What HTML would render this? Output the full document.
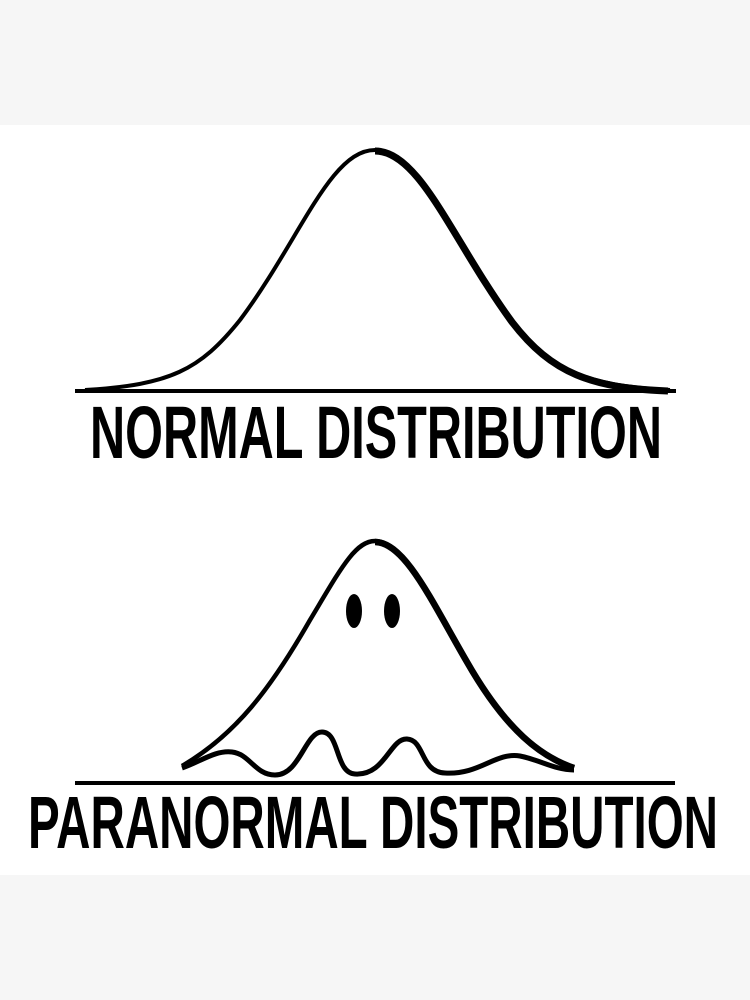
<!DOCTYPE html>
<html><head><style>
html,body{margin:0;padding:0;width:750px;height:1000px;background:#f6f6f6;overflow:hidden}
svg{display:block}
</style></head><body>
<svg width="750" height="1000" viewBox="0 0 750 1000">
<rect x="0" y="0" width="750" height="1000" fill="#f6f6f6"/>
<rect x="0" y="125" width="750" height="750" fill="#fff"/>
<!-- bell curve -->
<path d="M75 391 L676 391" stroke="#000" stroke-width="4" fill="none"/>
<path d="M85 390 C170 385 200 370 240 320 C300 240 330 150 375 150 C420 150 450 240 510 320 C550 372 590 386 670 390" stroke="#000" stroke-width="4" fill="none"/>
<path d="M375 151 C420 151 452 240 512 322 C552 374 592 388 668 391" stroke="#000" stroke-width="7" fill="none"/>
<text x="90" y="458" font-family="Liberation Sans, sans-serif" font-weight="bold" font-size="74" textLength="572" lengthAdjust="spacingAndGlyphs" fill="#000">NORMAL DISTRIBUTION</text>
<!-- ghost -->
<path d="M75 783 L675 783" stroke="#000" stroke-width="4" fill="none"/>
<path d="M182 766 C235 735 270 690 310 620 C340 570 355 541 375 541 C405 541 430 600 465 660 C505 730 540 755 574 768" stroke="#000" stroke-width="4.5" fill="none"/>
<path d="M375 542 C405 542 432 602 467 662 C507 732 542 757 574 768" stroke="#000" stroke-width="6.5" fill="none"/>
<path d="M182 768 C200 762 215 750 232 752 C250 754 255 775 275 775 C300 775 305 732 322 732 C340 732 335 773 355 774 C385 776 390 738 407 739 C425 740 420 772 445 773 C480 775 495 752 520 756 C540 760 555 770 574 770" stroke="#000" stroke-width="5" fill="none" stroke-linejoin="round"/>
<ellipse cx="354" cy="611" rx="8" ry="17" fill="#000"/>
<ellipse cx="392" cy="611" rx="8" ry="17" fill="#000"/>
<text x="28" y="848" font-family="Liberation Sans, sans-serif" font-weight="bold" font-size="74" textLength="690" lengthAdjust="spacingAndGlyphs" fill="#000">PARANORMAL DISTRIBUTION</text>
</svg>
</body></html>
